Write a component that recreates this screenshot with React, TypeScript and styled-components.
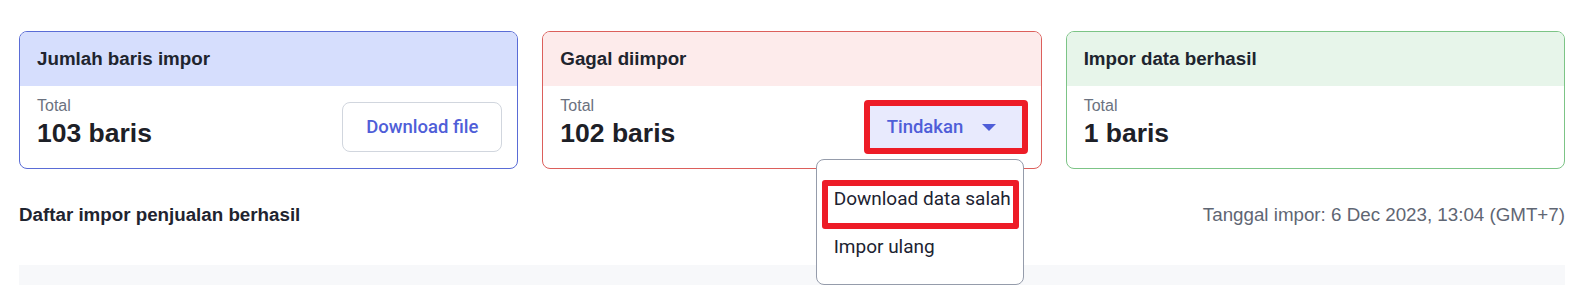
import styled, { createGlobalStyle } from "styled-components";

const GlobalStyle = createGlobalStyle`
  body {
    margin: 0;
    background: #ffffff;
    font-family: "Liberation Sans", Arial, sans-serif;
    color: #1f2430;
  }
`;

const Page = styled.div`
  padding: 31px 28px 0 19px;
`;

const CardGrid = styled.div`
  display: grid;
  grid-template-columns: repeat(3, 1fr);
  column-gap: 24px;
`;

type Tone = "blue" | "red" | "green";

const tones: Record<Tone, { border: string; head: string }> = {
  blue: { border: "#5a6cd6", head: "#d6defd" },
  red: { border: "#dc5f5b", head: "#fdebeb" },
  green: { border: "#7cc486", head: "#e7f5ea" },
};

const Card = styled.div<{ $tone: Tone }>`
  border: 1px solid ${(p) => tones[p.$tone].border};
  border-radius: 8px;
  background: #ffffff;
`;

const CardHead = styled.div<{ $tone: Tone }>`
  height: 54px;
  display: flex;
  align-items: center;
  padding: 0 17px;
  background: ${(p) => tones[p.$tone].head};
  border-radius: 7px 7px 0 0;
  font-size: 18.75px;
  font-weight: 700;
  color: #20242e;
`;

const CardBody = styled.div`
  height: 82px;
  box-sizing: border-box;
  display: flex;
  justify-content: space-between;
  align-items: flex-start;
  padding: 10px 15px 0 17px;
`;

const Stat = styled.div`
  display: flex;
  flex-direction: column;
  gap: 2px;
`;

const StatLabel = styled.div`
  font-size: 16px;
  line-height: 19px;
  color: #6b7280;
`;

const StatValue = styled.div`
  font-size: 26.5px;
  line-height: 32px;
  font-weight: 700;
  color: #1d2027;
`;

const OutlineButton = styled.button`
  margin-top: 6px;
  width: 160px;
  height: 50px;
  border: 1px solid #d1d6de;
  border-radius: 8px;
  background: #ffffff;
  font-family: Roboto, "Liberation Sans", sans-serif;
  font-weight: 500;
  font-size: 18.5px;
  color: #4f5ed8;
  cursor: pointer;
`;

const ActionWrap = styled.div`
  position: relative;
  margin-top: 4px;
  margin-right: -2px;
`;

const ActionButton = styled.button`
  box-sizing: border-box;
  width: 164px;
  height: 54px;
  display: flex;
  align-items: center;
  gap: 19px;
  padding: 0 0 0 17px;
  border: 6px solid #ed1c27;
  border-radius: 4px;
  background: #e8eafd;
  font-family: Roboto, "Liberation Sans", sans-serif;
  font-weight: 500;
  font-size: 18.5px;
  color: #4f5ed8;
  cursor: pointer;
`;

const Menu = styled.div`
  position: absolute;
  top: calc(100% + 5px);
  left: -48px;
  width: 208px;
  height: 126px;
  box-sizing: border-box;
  padding-top: 20px;
  border: 1px solid #959cab;
  border-radius: 8px;
  background: #ffffff;
  z-index: 10;
  font-family: Roboto, "Liberation Sans", sans-serif;
  font-size: 19px;
  color: #1c2331;
`;

const MenuItem = styled.div<{ $marked?: boolean }>`
  line-height: 24px;
  white-space: nowrap;
  ${(p) =>
    p.$marked
      ? `
    height: 49px;
    box-sizing: border-box;
    margin: 0 4px 0 5px;
    padding: 1px 6px 0;
    border: 6px solid #ed1c27;
    border-radius: 3px;
  `
      : `
    padding: 6px 17px;
  `}
`;

const SectionRow = styled.div`
  margin-top: 35px;
  display: flex;
  justify-content: space-between;
  align-items: center;
  line-height: 22px;
  font-size: 18.75px;
`;

const SectionTitle = styled.div`
  font-weight: 700;
  color: #1f2430;
`;

const ImportDate = styled.div`
  color: #5f6673;
`;

const TableTop = styled.div`
  margin-top: 39px;
  height: 40px;
  background: #f7f8fa;
`;

const Caret = () => (
  <svg width="14" height="7" viewBox="0 0 14 7">
    <path d="M0 0h14L7 7z" fill="#4f5ed8" />
  </svg>
);

export default function App() {
  return (
    <>
      <GlobalStyle />
      <Page>
        <CardGrid>
          <Card $tone="blue">
            <CardHead $tone="blue">Jumlah baris impor</CardHead>
            <CardBody>
              <Stat>
                <StatLabel>Total</StatLabel>
                <StatValue>103 baris</StatValue>
              </Stat>
              <OutlineButton>Download file</OutlineButton>
            </CardBody>
          </Card>

          <Card $tone="red">
            <CardHead $tone="red">Gagal diimpor</CardHead>
            <CardBody>
              <Stat>
                <StatLabel>Total</StatLabel>
                <StatValue>102 baris</StatValue>
              </Stat>
              <ActionWrap>
                <ActionButton>
                  Tindakan
                  <Caret />
                </ActionButton>
                <Menu>
                  <MenuItem $marked>Download data salah</MenuItem>
                  <MenuItem>Impor ulang</MenuItem>
                </Menu>
              </ActionWrap>
            </CardBody>
          </Card>

          <Card $tone="green">
            <CardHead $tone="green">Impor data berhasil</CardHead>
            <CardBody>
              <Stat>
                <StatLabel>Total</StatLabel>
                <StatValue>1 baris</StatValue>
              </Stat>
            </CardBody>
          </Card>
        </CardGrid>

        <SectionRow>
          <SectionTitle>Daftar impor penjualan berhasil</SectionTitle>
          <ImportDate>Tanggal impor: 6 Dec 2023, 13:04 (GMT+7)</ImportDate>
        </SectionRow>
        <TableTop />
      </Page>
    </>
  );
}
